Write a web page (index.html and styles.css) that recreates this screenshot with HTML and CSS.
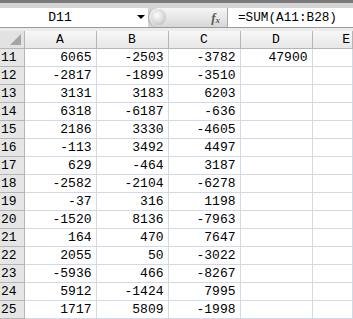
FILE: index.html
```html
<!DOCTYPE html>
<html>
<head>
<meta charset="utf-8">
<link rel="stylesheet" href="styles.css">
</head>
<body>
<div class="top"></div>
<div class="fbar">
  <div class="namebox"><span class="name">D11</span><span class="arrow"></span></div>
  <div class="btn"><span class="knob"></span><span class="fx">f<sub>x</sub></span></div>
  <div class="formula">=SUM(A11:B28)</div>
</div>
<div class="gap"></div>
<table class="sheet">
  <colgroup><col class="c-rh"><col class="c"><col class="c"><col class="c"><col class="c"><col></colgroup>
  <tr class="hdr"><th class="corner"><span class="tri"></span></th><th>A</th><th>B</th><th>C</th><th>D</th><th class="last">E</th></tr>
  <tr><th>11</th><td>6065</td><td>-2503</td><td>-3782</td><td>47900</td><td></td></tr>
  <tr><th>12</th><td>-2817</td><td>-1899</td><td>-3510</td><td></td><td></td></tr>
  <tr><th>13</th><td>3131</td><td>3183</td><td>6203</td><td></td><td></td></tr>
  <tr><th>14</th><td>6318</td><td>-6187</td><td>-636</td><td></td><td></td></tr>
  <tr><th>15</th><td>2186</td><td>3330</td><td>-4605</td><td></td><td></td></tr>
  <tr><th>16</th><td>-113</td><td>3492</td><td>4497</td><td></td><td></td></tr>
  <tr><th>17</th><td>629</td><td>-464</td><td>3187</td><td></td><td></td></tr>
  <tr><th>18</th><td>-2582</td><td>-2104</td><td>-6278</td><td></td><td></td></tr>
  <tr><th>19</th><td>-37</td><td>316</td><td>1198</td><td></td><td></td></tr>
  <tr><th>20</th><td>-1520</td><td>8136</td><td>-7963</td><td></td><td></td></tr>
  <tr><th>21</th><td>164</td><td>470</td><td>7647</td><td></td><td></td></tr>
  <tr><th>22</th><td>2055</td><td>50</td><td>-3022</td><td></td><td></td></tr>
  <tr><th>23</th><td>-5936</td><td>466</td><td>-8267</td><td></td><td></td></tr>
  <tr><th>24</th><td>5912</td><td>-1424</td><td>7995</td><td></td><td></td></tr>
  <tr><th>25</th><td>1717</td><td>5809</td><td>-1998</td><td></td><td></td></tr>
</table>
</body>
</html>
```
FILE: styles.css
```css
html, body { margin: 0; padding: 0; background: #fff; overflow: hidden; }
body { font-family: "Liberation Mono", "DejaVu Sans Mono", monospace; color: #000; }
.top { height: 5px; border-top: 3px solid #7a7a7a; background: #d4d4d4; }
.fbar { display: flex; height: 19px; border-bottom: 1px solid #9a9a9a; background: #d4d4d4; }
.namebox { width: 148px; background: #fff; position: relative; display: flex; align-items: center; justify-content: center; font-size: 13px; }
.name { margin-left: -28px; }
.arrow { position: absolute; left: 137px; top: 7px; width: 0; height: 0; border-left: 4px solid transparent; border-right: 4px solid transparent; border-top: 4px solid #000; }
.btn { width: 78px; position: relative; background: linear-gradient(#f6f6f6, #e4e4e4 60%, #d6d6d6); border-left: 1px solid #a8a8a8; border-radius: 10px 0 0 10px; display: flex; align-items: center; justify-content: flex-end; }
.knob { position: absolute; left: 2px; top: 1px; width: 15px; height: 16px; border-radius: 50%; background: radial-gradient(circle at 40% 40%, #ffffff, #cfcfcf 65%, #a4a4a4); }
.fx { font-family: "Liberation Serif", serif; font-style: italic; font-weight: bold; font-size: 13px; color: #5a5a5a; margin-right: 7px; }
.fx sub { font-size: 9px; vertical-align: -1px; }
.formula { flex: 1; background: #fff; border-left: 1px solid #a8a8a8; font-size: 12.7px; padding-left: 10px; line-height: 19px; }
.gap { height: 3px; background: #ececec; }
.sheet { border-collapse: collapse; table-layout: fixed; width: 100%; font-size: 13px; }
.c-rh { width: 24px; }
.c { width: 72px; }
.sheet th, .sheet td { height: 17px; padding: 0; white-space: nowrap; overflow: hidden; }
.sheet th { font-weight: normal; background: #e6e6e6; border: 1px solid #b6b6b6; text-align: left; padding-left: 1px; }
.sheet .hdr th { background: linear-gradient(#f7f7f7, #e7e7e7); text-align: center; padding-left: 0; border-top: none; }
.sheet .hdr th.corner { background: #e2e2e2; position: relative; }
.tri { position: absolute; right: 3px; bottom: 3px; width: 0; height: 0; border-left: 11px solid transparent; border-bottom: 11px solid #a4a4a4; }
.sheet .hdr th.last { text-align: right; padding-right: 2px; }
.sheet td { border: 1px solid #d2d8e4; text-align: right; padding-right: 4px; }
.sheet tr > :first-child { border-left: none; }
```
